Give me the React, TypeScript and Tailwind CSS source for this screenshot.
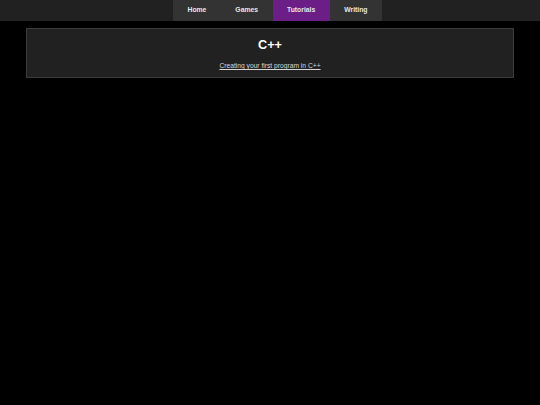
const links = ["Home", "Games", "Tutorials", "Writing"];

export default function App() {
  return (
    <div className="min-h-[405px] bg-black font-['Liberation_Sans',Arial,sans-serif]">
      <nav className="flex h-[21px] justify-center bg-[#212121] pl-[15px]">
        {links.map((l) => (
          <a
            key={l}
            className={
              l === "Tutorials"
                ? "flex items-center bg-[#6a1e86] px-[14.5px] text-[6.8px] font-bold text-[#e6e6e6]"
                : "flex items-center bg-[#333333] px-[14.5px] text-[6.8px] font-bold text-[#e6e6e6]"
            }
          >
            {l}
          </a>
        ))}
      </nav>
      <section className="mx-[26px] mt-[7px] flex h-[50px] flex-col items-center border border-[#3c3c3c] bg-[#212121]">
        <h1 className="mt-[9px] text-[12.7px] leading-[15px] font-bold text-white">C++</h1>
        <a className="mt-[9px] text-[6.7px] leading-[8px] text-[#d8d8d8] underline">
          Creating your first program in C++
        </a>
      </section>
    </div>
  );
}
